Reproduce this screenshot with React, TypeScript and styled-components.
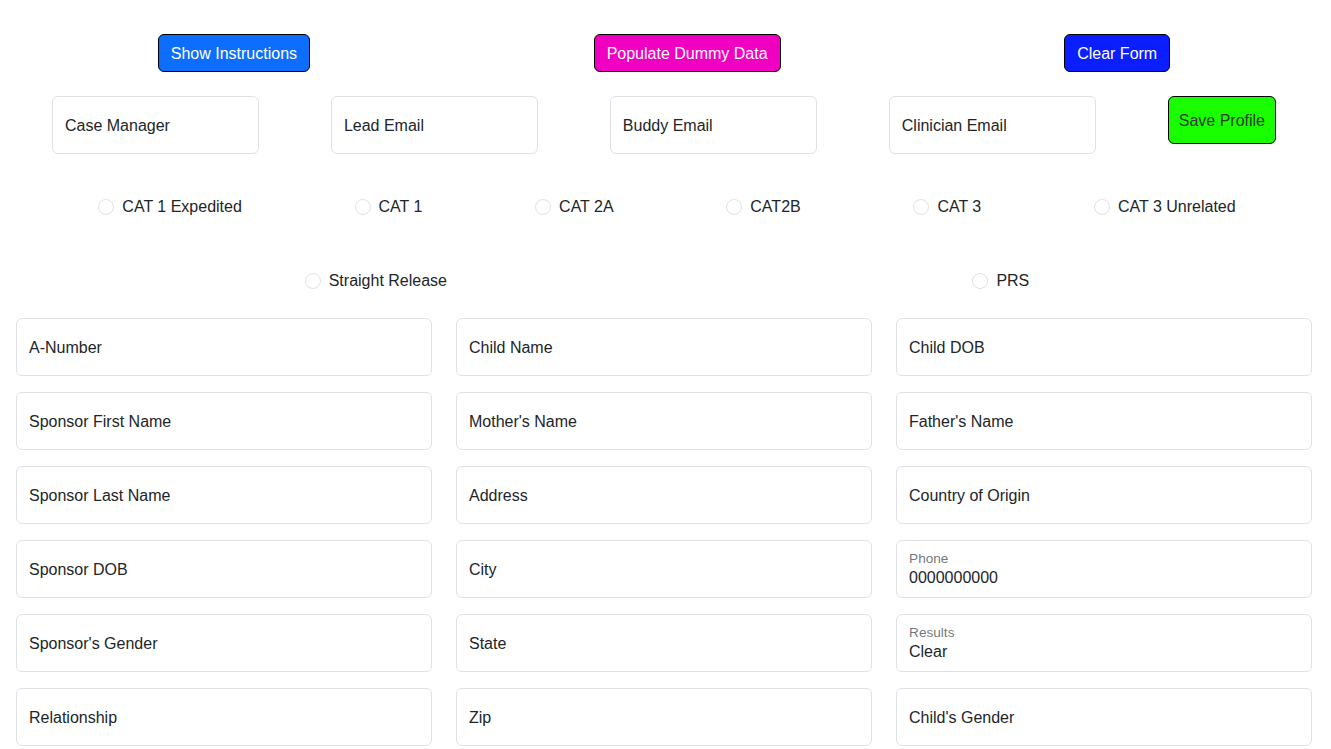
import React from "react";
import styled, { createGlobalStyle } from "styled-components";

const Global = createGlobalStyle`
  html, body { margin: 0; padding: 0; background: #fff; }
  body {
    font-family: "Liberation Sans", Arial, sans-serif;
    font-size: 16px;
    line-height: 1.5;
    color: #212529;
  }
  * { box-sizing: border-box; }
`;

const Page = styled.div`
  width: 1296px;
  margin-left: 16px;
  padding-top: 34px;
`;

const ButtonRow = styled.div`
  display: flex;
  justify-content: space-around;
  align-items: flex-start;
`;

const Btn = styled.button<{ $bg: string; $fg?: string; $pad?: string }>`
  font-family: inherit;
  font-size: 16px;
  line-height: 24px;
  padding: ${(p) => p.$pad || "7px 12px 5px"};
  border: 1px solid #000;
  border-radius: 6px;
  background: ${(p) => p.$bg};
  color: ${(p) => p.$fg || "#fff"};
  cursor: pointer;
`;

const TopRow = styled.div`
  display: flex;
  justify-content: space-around;
  align-items: flex-start;
  margin-top: 24px;
`;

const Floating = styled.div<{ $w?: string }>`
  position: relative;
  width: ${(p) => p.$w || "auto"};
`;

const Input = styled.input`
  display: block;
  width: 100%;
  height: 58px;
  padding: 27px 12px 9px;
  font-family: inherit;
  font-size: 16px;
  line-height: 24px;
  color: #212529;
  background: #fff;
  border: 1px solid #dee2e6;
  border-radius: 6px;
  outline: none;
`;

const Label = styled.label<{ $floated?: boolean }>`
  position: absolute;
  top: 0;
  left: 0;
  height: 100%;
  padding: 17px 12px 15px;
  border: 1px solid transparent;
  pointer-events: none;
  white-space: nowrap;
  transform-origin: 0 0;
  color: ${(p) => (p.$floated ? "rgba(33,37,41,.65)" : "#212529")};
  transform: ${(p) =>
    p.$floated ? "scale(.85) translateY(-.5rem) translateX(.15rem)" : "none"};
`;

const RadioRow = styled.div<{ $mt: number }>`
  display: flex;
  justify-content: space-around;
  align-items: center;
  padding: 1px 20px 0 26px;
  margin-top: ${(p) => p.$mt}px;
  height: 24px;
`;

const RadioItem = styled.label`
  display: flex;
  align-items: center;
  gap: 8px;
  white-space: nowrap;
`;

const RadioDot = styled.span`
  width: 16px;
  height: 16px;
  border-radius: 50%;
  border: 1px solid #dee2e6;
  background: #fff;
  display: inline-block;
`;

const Grid = styled.div`
  display: grid;
  grid-template-columns: repeat(3, 1fr);
  column-gap: 24px;
  row-gap: 16px;
  margin-top: 26px;
  padding-bottom: 16px;
`;

type FieldProps = { label: string; value?: string; w?: string };

function Field({ label, value, w }: FieldProps) {
  const floated = !!value;
  return (
    <Floating $w={w}>
      <Input readOnly value={value || ""} aria-label={label} />
      <Label $floated={floated}>{label}</Label>
    </Floating>
  );
}

const radios1 = ["CAT 1 Expedited", "CAT 1", "CAT 2A", "CAT2B", "CAT 3", "CAT 3 Unrelated"];
const radios2 = ["Straight Release", "PRS"];

const fields: FieldProps[] = [
  { label: "A-Number" },
  { label: "Child Name" },
  { label: "Child DOB" },
  { label: "Sponsor First Name" },
  { label: "Mother's Name" },
  { label: "Father's Name" },
  { label: "Sponsor Last Name" },
  { label: "Address" },
  { label: "Country of Origin" },
  { label: "Sponsor DOB" },
  { label: "City" },
  { label: "Phone", value: "0000000000" },
  { label: "Sponsor's Gender" },
  { label: "State" },
  { label: "Results", value: "Clear" },
  { label: "Relationship" },
  { label: "Zip" },
  { label: "Child's Gender" },
];

export default function App() {
  return (
    <>
      <Global />
      <Page>
        <ButtonRow>
          <Btn $bg="#0d6efd">Show Instructions</Btn>
          <Btn $bg="#f000c0">Populate Dummy Data</Btn>
          <Btn $bg="#0a1eff">Clear Form</Btn>
        </ButtonRow>
        <TopRow>
          <Field label="Case Manager" w="207px" />
          <Field label="Lead Email" w="207px" />
          <Field label="Buddy Email" w="207px" />
          <Field label="Clinician Email" w="207px" />
          <Btn $bg="#19ff00" $fg="#2a3b2a" $pad="12px 10px 10px">
            Save Profile
          </Btn>
        </TopRow>
        <RadioRow $mt={40}>
          {radios1.map((r) => (
            <RadioItem key={r}>
              <RadioDot />
              {r}
            </RadioItem>
          ))}
        </RadioRow>
        <RadioRow $mt={50}>
          {radios2.map((r) => (
            <RadioItem key={r}>
              <RadioDot />
              {r}
            </RadioItem>
          ))}
        </RadioRow>
        <Grid>
          {fields.map((f) => (
            <Field key={f.label} {...f} />
          ))}
        </Grid>
      </Page>
    </>
  );
}
